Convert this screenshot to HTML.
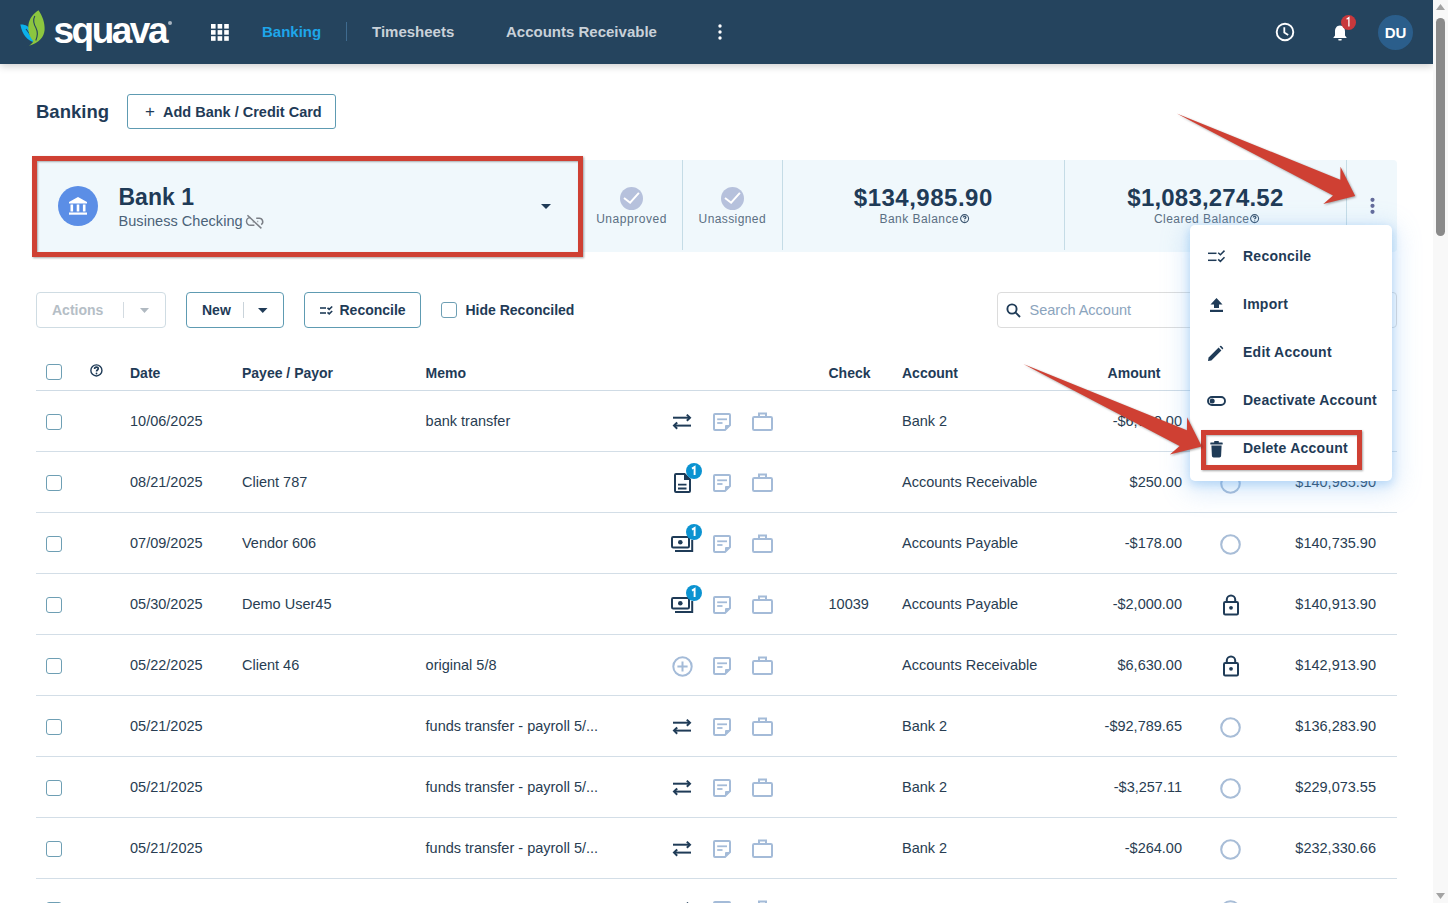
<!DOCTYPE html>
<html><head><meta charset="utf-8"><title>Banking</title>
<style>
*{box-sizing:border-box;margin:0;padding:0}
html,body{width:1448px;height:903px;overflow:hidden;background:#fff;font-family:"Liberation Sans",sans-serif;color:#1f3b57}
.abs{position:absolute}
.t{position:absolute;white-space:nowrap}
svg{position:absolute;overflow:visible}
</style></head><body>
<div class="abs" style="left:0;top:0;width:1433px;height:64px;background:#25445e;box-shadow:0 2px 8px rgba(0,0,0,.2);z-index:5">
<svg style="left:15px;top:5px" width="45" height="50" viewBox="0 0 45 50">
<path d="M5.3 19.6 C10 19.2 14 21.5 15.5 25 L18.8 37.2 C12 35.5 7.5 30 5.3 19.6Z" fill="#0cb0ea"/>
<path d="M11 24 L18.5 34" stroke="#24435e" stroke-width="1.1" fill="none"/>
<path d="M23.5 5.3 C27.5 11 30 18 29.6 25 C29 32 24.5 37.5 14 40.8 C16.5 39 18 37.5 18.3 36 C14.5 32 12.8 26 13.4 20 C14.5 13 18.5 8.5 23.5 5.3Z" fill="#8cc63f"/>
<path d="M19.8 11 C17.5 15.5 19 19.5 21 23 C23 27 22.5 31.5 20.8 35.5" stroke="#24435e" stroke-width="1.1" fill="none"/>
</svg>
<div class="t" style="left:53.5px;top:11.5px;font-size:37px;line-height:37px;font-weight:bold;color:#fff;letter-spacing:-2.5px">squava</div>
<div class="abs" style="left:168.3px;top:21px;width:4.2px;height:4.2px;border-radius:50%;background:#a9b5c1"></div>
<svg style="left:211px;top:23.5px" width="18" height="17" viewBox="0 0 18 17" fill="#fff"><rect x="0.0" y="0.0" width="4.6" height="4.6"/><rect x="6.6" y="0.0" width="4.6" height="4.6"/><rect x="13.2" y="0.0" width="4.6" height="4.6"/><rect x="0.0" y="6.1" width="4.6" height="4.6"/><rect x="6.6" y="6.1" width="4.6" height="4.6"/><rect x="13.2" y="6.1" width="4.6" height="4.6"/><rect x="0.0" y="12.2" width="4.6" height="4.6"/><rect x="6.6" y="12.2" width="4.6" height="4.6"/><rect x="13.2" y="12.2" width="4.6" height="4.6"/></svg>
<div class="t" style="left:262.00px;top:24.30px;font-size:15px;line-height:15px;color:#1ea6ea;font-weight:bold;">Banking</div>
<div class="abs" style="left:346px;top:22px;width:1px;height:19px;background:#3f6b8f"></div>
<div class="t" style="left:372.00px;top:24.30px;font-size:15px;line-height:15px;color:#c9d1d9;font-weight:bold;">Timesheets</div>
<div class="t" style="left:506.00px;top:24.30px;font-size:15px;line-height:15px;color:#c9d1d9;font-weight:bold;">Accounts Receivable</div>
<svg style="left:716px;top:23px" width="8" height="18" viewBox="0 0 8 18" fill="#fff"><circle cx="4" cy="3" r="1.7"/><circle cx="4" cy="9" r="1.7"/><circle cx="4" cy="15" r="1.7"/></svg>
<svg style="left:1275px;top:22px" width="20" height="20" viewBox="0 0 20 20"><circle cx="10" cy="10" r="8.3" stroke="#fff" stroke-width="1.9" fill="none"/><path d="M9.3 5.3 V10.6 L13.2 13" stroke="#fff" stroke-width="1.8" fill="none"/></svg>
<svg style="left:1331px;top:22px" width="18" height="20" viewBox="0 0 18 20"><path d="M9 3.5 C5.5 3.5 4 6.5 4 9.5 V13.5 L2.2 16 H15.8 L14 13.5 V9.5 C14 6.5 12.5 3.5 9 3.5Z" fill="#fff"/><rect x="7.2" y="17" width="3.6" height="1.5" rx="0.7" fill="#fff"/></svg>
<svg style="left:1341px;top:15px" width="15" height="15" viewBox="0 0 15 15"><circle cx="7.5" cy="7.5" r="7.5" fill="#c8383c"/><path d="M5.6 4.3 L7.9 2.6 V11.6" stroke="#fff" stroke-width="1.3" fill="none"/></svg>
<div class="abs" style="left:1378px;top:15px;width:35px;height:35px;border-radius:50%;background:#2b5e8b;color:#fff;font-size:15px;font-weight:bold;text-align:center;line-height:35px">DU</div>
</div>
<div class="abs" style="left:1433px;top:0;width:15px;height:903px;background:#f8f8f8;z-index:20"><svg style="left:3px;top:4px" width="9" height="6" viewBox="0 0 9 6"><path d="M4.5 0 L9 6 H0Z" fill="#a3a3a3"/></svg><div class="abs" style="left:3px;top:18px;width:9px;height:218px;border-radius:5px;background:#8a8a8a"></div><svg style="left:3px;top:893px" width="9" height="6" viewBox="0 0 9 6"><path d="M0 0 H9 L4.5 6Z" fill="#a3a3a3"/></svg></div>
<div class="t" style="left:36.00px;top:102.94px;font-size:18.5px;line-height:18.5px;color:#1f3b57;font-weight:bold;">Banking</div>
<div class="abs" style="left:127px;top:94px;width:209px;height:35px;border:1px solid #5e9bb2;border-radius:3px"></div>
<div class="t" style="left:145.00px;top:104.73px;font-size:14.5px;line-height:14.5px;color:#1f3b57;font-size:17px">+</div>
<div class="t" style="left:163.00px;top:104.73px;font-size:14.5px;line-height:14.5px;color:#1f3b57;font-weight:bold;">Add Bank / Credit Card</div>
<div class="abs" style="left:36px;top:160px;width:1361px;height:92px;background:#f0f8fc;border-radius:4px"></div>
<div class="abs" style="left:682px;top:160px;width:1px;height:90px;background:#c5dce6"></div>
<div class="abs" style="left:782px;top:160px;width:1px;height:90px;background:#c5dce6"></div>
<div class="abs" style="left:1064px;top:160px;width:1px;height:90px;background:#c5dce6"></div>
<div class="abs" style="left:1346px;top:160px;width:1px;height:90px;background:#c5dce6"></div>
<div class="abs" style="left:31.5px;top:156.2px;width:551px;height:100.7px;border:5px solid #cf4033;box-shadow:1px 1px 2px rgba(0,0,0,.35), inset 1px 1px 2px rgba(0,0,0,.3)"></div>
<div class="abs" style="left:58px;top:186px;width:40px;height:40px;border-radius:50%;background:#5b8ee6"></div>
<svg style="left:67px;top:195px" width="22" height="22" viewBox="0 0 22 22" fill="#fff">
<path d="M11 2 L20 7 V8.5 H2 V7Z"/><rect x="3.5" y="9.5" width="2.6" height="7"/><rect x="9.7" y="9.5" width="2.6" height="7"/><rect x="15.9" y="9.5" width="2.6" height="7"/><rect x="2" y="17.5" width="18" height="2.2"/>
</svg>
<div class="t" style="left:118.50px;top:185.53px;font-size:23px;line-height:23px;color:#1f3b57;font-weight:bold;">Bank 1</div>
<div class="t" style="left:118.50px;top:214.33px;font-size:14.5px;line-height:14.5px;color:#4b6278;letter-spacing:0.05px">Business Checking</div>
<svg style="left:240px;top:208px" width="30" height="26" viewBox="0 0 30 26" fill="none" stroke="#7b7f86" stroke-width="1.5">
<path d="M10.3 9.5 A3.9 3.9 0 0 0 10.5 17.3 H14.4"/><path d="M12.8 13.9 H13.6"/><path d="M16.2 10.2 H19.3 A3.5 3.5 0 0 1 21.2 16.6"/><path d="M17.4 13.4 H18.2"/><path d="M7.4 7.2 L21.4 20.4"/>
</svg>
<svg style="left:541px;top:204px" width="10" height="5" viewBox="0 0 10 5"><path d="M0 0 H10 L5 5Z" fill="#1f3b57"/></svg>
<svg style="left:620.1px;top:186.5px" width="23" height="23" viewBox="0 0 23 23"><circle cx="11.5" cy="11.5" r="11.5" fill="#b6c1dc"/><path d="M4 11 L10.1 15.7 L18.9 5.9" stroke="#fff" stroke-width="2" fill="none"/></svg>
<svg style="left:720.8px;top:186.5px" width="23" height="23" viewBox="0 0 23 23"><circle cx="11.5" cy="11.5" r="11.5" fill="#b6c1dc"/><path d="M4 11 L10.1 15.7 L18.9 5.9" stroke="#fff" stroke-width="2" fill="none"/></svg>
<div class="t" style="left:331.60px;width:600px;text-align:center;top:212.84px;font-size:12px;line-height:12px;color:#5b6f83;letter-spacing:0.55px">Unapproved</div>
<div class="t" style="left:432.30px;width:600px;text-align:center;top:212.84px;font-size:12px;line-height:12px;color:#5b6f83;letter-spacing:0.4px">Unassigned</div>
<div class="t" style="left:623.30px;width:600px;text-align:center;top:185.78px;font-size:24px;line-height:24px;color:#1f3b57;font-weight:bold;letter-spacing:0.5px">$134,985.90</div>
<div class="t" style="left:905.40px;width:600px;text-align:center;top:185.78px;font-size:24px;line-height:24px;color:#1f3b57;font-weight:bold;letter-spacing:0.2px">$1,083,274.52</div>
<div class="t" style="left:879.50px;top:212.84px;font-size:12px;line-height:12px;color:#5b6f83;letter-spacing:0.45px">Bank Balance</div>
<svg style="left:959.9px;top:214.4px" width="9.2" height="9.2" viewBox="0 0 12 12"><circle cx="6" cy="6" r="5.2" stroke="#3c5670" stroke-width="1.45" fill="none"/><path d="M4.3 4.7 C4.3 3.6 5.1 3 6 3 C7 3 7.7 3.6 7.7 4.5 C7.7 5.6 6.1 5.7 6.1 7" stroke="#3c5670" stroke-width="1.74" fill="none"/><circle cx="6.1" cy="8.9" r="0.85" fill="#3c5670"/></svg>
<div class="t" style="left:1154.00px;top:212.84px;font-size:12px;line-height:12px;color:#5b6f83;letter-spacing:0.45px">Cleared Balance</div>
<svg style="left:1249.9px;top:214.4px" width="9.2" height="9.2" viewBox="0 0 12 12"><circle cx="6" cy="6" r="5.2" stroke="#3c5670" stroke-width="1.45" fill="none"/><path d="M4.3 4.7 C4.3 3.6 5.1 3 6 3 C7 3 7.7 3.6 7.7 4.5 C7.7 5.6 6.1 5.7 6.1 7" stroke="#3c5670" stroke-width="1.74" fill="none"/><circle cx="6.1" cy="8.9" r="0.85" fill="#3c5670"/></svg>
<svg style="left:1368px;top:197px" width="9" height="18" viewBox="0 0 9 18" fill="#646b9a"><circle cx="4.5" cy="2.8" r="2.1"/><circle cx="4.5" cy="8.8" r="2.1"/><circle cx="4.5" cy="14.8" r="2.1"/></svg>
<div class="abs" style="left:36px;top:292px;width:130px;height:35.5px;border:1px solid #cfdce3;border-radius:4px"></div>
<div class="t" style="left:52.00px;top:303.15px;font-size:14px;line-height:14px;color:#b5bec6;font-weight:bold;">Actions</div>
<div class="abs" style="left:123px;top:302px;width:1px;height:16px;background:#d3dbe1"></div>
<svg style="left:140px;top:308px" width="9" height="5" viewBox="0 0 9 5"><path d="M0 0 H9 L4.5 5Z" fill="#b0b9c1"/></svg>
<div class="abs" style="left:186px;top:292px;width:98px;height:35.5px;border:1px solid #5e9bb2;border-radius:4px"></div>
<div class="t" style="left:202.00px;top:303.15px;font-size:14px;line-height:14px;color:#1f3b57;font-weight:bold;">New</div>
<div class="abs" style="left:242.5px;top:302px;width:1px;height:16px;background:#c9d3da"></div>
<svg style="left:258px;top:308px" width="9.5" height="5" viewBox="0 0 9.5 5"><path d="M0 0 H9.5 L4.75 5Z" fill="#1f3b57"/></svg>
<div class="abs" style="left:304px;top:292px;width:117px;height:35.5px;border:1px solid #5e9bb2;border-radius:4px"></div>
<svg style="left:320px;top:306px" width="13" height="9" viewBox="0 0 13 9" fill="none" stroke="#1f3b57" stroke-width="1.6"><path d="M0 2 H6"/><path d="M0 7 H6"/><path d="M7.5 1.8 L9.2 3.4 L12.2 0.5"/><path d="M7.5 6.3 L9.2 7.9 L12.2 5"/></svg>
<div class="t" style="left:339.50px;top:303.15px;font-size:14px;line-height:14px;color:#1f3b57;font-weight:bold;">Reconcile</div>
<div class="abs" style="left:441px;top:302px;width:16px;height:16px;border:1.3px solid #6e9fb4;border-radius:3px;background:#fff"></div>
<div class="t" style="left:465.50px;top:303.15px;font-size:14px;line-height:14px;color:#1f3b57;font-weight:bold;">Hide Reconciled</div>
<div class="abs" style="left:997px;top:292px;width:400px;height:35.5px;border:1px solid #dcdcdc;border-radius:4px"></div>
<svg style="left:1006px;top:302.5px" width="16" height="15" viewBox="0 0 16 15" fill="none" stroke="#1f3b57" stroke-width="1.9"><circle cx="6" cy="6" r="4.6"/><path d="M9.4 9.4 L14 14"/></svg>
<div class="t" style="left:1029.50px;top:302.73px;font-size:14.5px;line-height:14.5px;color:#8ba4bd;">Search Account</div>
<div class="abs" style="left:46px;top:364px;width:16px;height:16px;border:1.3px solid #6e9fb4;border-radius:3px"></div>
<svg style="left:89.8px;top:364.0px" width="12.8" height="12.8" viewBox="0 0 12 12"><circle cx="6" cy="6" r="5.2" stroke="#1f3b57" stroke-width="1.3" fill="none"/><path d="M4.3 4.7 C4.3 3.6 5.1 3 6 3 C7 3 7.7 3.6 7.7 4.5 C7.7 5.6 6.1 5.7 6.1 7" stroke="#1f3b57" stroke-width="1.56" fill="none"/><circle cx="6.1" cy="8.9" r="0.85" fill="#1f3b57"/></svg>
<div class="t" style="left:130.00px;top:366.15px;font-size:14px;line-height:14px;color:#1f3b57;font-weight:bold;">Date</div>
<div class="t" style="left:242.00px;top:366.15px;font-size:14px;line-height:14px;color:#1f3b57;font-weight:bold;">Payee / Payor</div>
<div class="t" style="left:425.60px;top:366.15px;font-size:14px;line-height:14px;color:#1f3b57;font-weight:bold;">Memo</div>
<div class="t" style="left:828.50px;top:366.15px;font-size:14px;line-height:14px;color:#1f3b57;font-weight:bold;">Check</div>
<div class="t" style="left:902.00px;top:366.15px;font-size:14px;line-height:14px;color:#1f3b57;font-weight:bold;">Account</div>
<div class="t" style="right:287.50px;top:366.15px;font-size:14px;line-height:14px;color:#1f3b57;font-weight:bold;">Amount</div>
<div class="abs" style="left:36px;top:389.5px;width:1361px;height:1.5px;background:#cfdbe5"></div>
<div class="abs" style="left:46px;top:413.5px;width:16px;height:16px;border:1.3px solid #6e9fb4;border-radius:3px"></div>
<div class="t" style="left:130.00px;top:414.43px;font-size:14.5px;line-height:14.5px;color:#283d52;">10/06/2025</div>
<div class="t" style="left:425.60px;top:414.43px;font-size:14.5px;line-height:14.5px;color:#283d52;">bank transfer</div>
<svg style="left:672px;top:413px" width="20" height="16" viewBox="0 0 20 16" fill="none" stroke="#1f3b57" stroke-width="2"><path d="M1 4.7 H18"/><path d="M14.8 1.6 L18 4.7 L14.8 7.8"/><path d="M19 12.6 H2"/><path d="M5.2 9.5 L2 12.6 L5.2 15.7"/></svg>
<svg style="left:713px;top:413px" width="18" height="18" viewBox="0 0 18 18"><path d="M2 1 H16 A1 1 0 0 1 17 2 V12 L12 17 H2 A1 1 0 0 1 1 16 V2 A1 1 0 0 1 2 1Z" fill="none" stroke="#a4bbd8" stroke-width="2"/><path d="M17 12 L12 17 V13 A1 1 0 0 1 13 12Z" fill="#a4bbd8"/><path d="M4.2 6.3 H14" stroke="#a4bbd8" stroke-width="1.8"/><path d="M4.2 10 H9.5" stroke="#a4bbd8" stroke-width="1.8"/></svg>
<svg style="left:751.9px;top:412.0px" width="21" height="19" viewBox="0 0 21 19" fill="none" stroke="#a4bbd8" stroke-width="2"><rect x="1" y="5" width="19" height="13" rx="1.2"/><path d="M7 5 V1.5 H14 V5"/></svg>
<div class="t" style="left:902.00px;top:414.43px;font-size:14.5px;line-height:14.5px;color:#283d52;">Bank 2</div>
<div class="t" style="right:266.00px;top:414.43px;font-size:14.5px;line-height:14.5px;color:#283d52;">-$6,000.00</div>
<svg style="left:1220.1px;top:411.5px" width="21" height="21" viewBox="0 0 21 21"><circle cx="10.5" cy="10.5" r="9.3" stroke="#a8bdd7" stroke-width="2.1" fill="none"/></svg>
<div class="t" style="right:72.00px;top:414.43px;font-size:14.5px;line-height:14.5px;color:#283d52;">$134,985.90</div>
<div class="abs" style="left:36px;top:450.5px;width:1361px;height:1.5px;background:#d3dee7"></div>
<div class="abs" style="left:46px;top:474.5px;width:16px;height:16px;border:1.3px solid #6e9fb4;border-radius:3px"></div>
<div class="t" style="left:130.00px;top:475.43px;font-size:14.5px;line-height:14.5px;color:#283d52;">08/21/2025</div>
<div class="t" style="left:242.00px;top:475.43px;font-size:14.5px;line-height:14.5px;color:#283d52;">Client 787</div>
<svg style="left:673.5px;top:473.2px" width="17" height="20" viewBox="0 0 17 20"><path d="M2 1 H10.5 L16 6.5 V18 A1 1 0 0 1 15 19 H2 A1 1 0 0 1 1 18 V2 A1 1 0 0 1 2 1Z" fill="none" stroke="#1f3b57" stroke-width="2"/><path d="M10 1 L16 7 H10Z" fill="#1f3b57"/><path d="M4 11.6 H12.5 M4 15.5 H12.5" stroke="#1f3b57" stroke-width="1.9"/></svg>
<svg style="left:686px;top:463px" width="16" height="16" viewBox="0 0 16 16"><circle cx="8" cy="8" r="8" fill="#0b93d1"/><path d="M6 5.6 L8.6 4 V12" stroke="#fff" stroke-width="1.9" fill="none"/></svg>
<svg style="left:713px;top:474px" width="18" height="18" viewBox="0 0 18 18"><path d="M2 1 H16 A1 1 0 0 1 17 2 V12 L12 17 H2 A1 1 0 0 1 1 16 V2 A1 1 0 0 1 2 1Z" fill="none" stroke="#a4bbd8" stroke-width="2"/><path d="M17 12 L12 17 V13 A1 1 0 0 1 13 12Z" fill="#a4bbd8"/><path d="M4.2 6.3 H14" stroke="#a4bbd8" stroke-width="1.8"/><path d="M4.2 10 H9.5" stroke="#a4bbd8" stroke-width="1.8"/></svg>
<svg style="left:751.9px;top:473.0px" width="21" height="19" viewBox="0 0 21 19" fill="none" stroke="#a4bbd8" stroke-width="2"><rect x="1" y="5" width="19" height="13" rx="1.2"/><path d="M7 5 V1.5 H14 V5"/></svg>
<div class="t" style="left:902.00px;top:475.43px;font-size:14.5px;line-height:14.5px;color:#283d52;">Accounts Receivable</div>
<div class="t" style="right:266.00px;top:475.43px;font-size:14.5px;line-height:14.5px;color:#283d52;">$250.00</div>
<svg style="left:1220.1px;top:472.5px" width="21" height="21" viewBox="0 0 21 21"><circle cx="10.5" cy="10.5" r="9.3" stroke="#a8bdd7" stroke-width="2.1" fill="none"/></svg>
<div class="t" style="right:72.00px;top:475.43px;font-size:14.5px;line-height:14.5px;color:#283d52;">$140,985.90</div>
<div class="abs" style="left:36px;top:511.5px;width:1361px;height:1.5px;background:#d3dee7"></div>
<div class="abs" style="left:46px;top:535.5px;width:16px;height:16px;border:1.3px solid #6e9fb4;border-radius:3px"></div>
<div class="t" style="left:130.00px;top:536.43px;font-size:14.5px;line-height:14.5px;color:#283d52;">07/09/2025</div>
<div class="t" style="left:242.00px;top:536.43px;font-size:14.5px;line-height:14.5px;color:#283d52;">Vendor 606</div>
<svg style="left:671px;top:536px" width="23" height="16" viewBox="0 0 23 16" fill="none" stroke="#1f3b57" stroke-width="2"><rect x="1" y="1" width="17" height="10.5" rx="1.2"/><circle cx="9.3" cy="6.2" r="2.3" fill="#1f3b57" stroke="none"/><path d="M4 15 H21.2 V4"/></svg>
<svg style="left:686px;top:524px" width="16" height="16" viewBox="0 0 16 16"><circle cx="8" cy="8" r="8" fill="#0b93d1"/><path d="M6 5.6 L8.6 4 V12" stroke="#fff" stroke-width="1.9" fill="none"/></svg>
<svg style="left:713px;top:535px" width="18" height="18" viewBox="0 0 18 18"><path d="M2 1 H16 A1 1 0 0 1 17 2 V12 L12 17 H2 A1 1 0 0 1 1 16 V2 A1 1 0 0 1 2 1Z" fill="none" stroke="#a4bbd8" stroke-width="2"/><path d="M17 12 L12 17 V13 A1 1 0 0 1 13 12Z" fill="#a4bbd8"/><path d="M4.2 6.3 H14" stroke="#a4bbd8" stroke-width="1.8"/><path d="M4.2 10 H9.5" stroke="#a4bbd8" stroke-width="1.8"/></svg>
<svg style="left:751.9px;top:534.0px" width="21" height="19" viewBox="0 0 21 19" fill="none" stroke="#a4bbd8" stroke-width="2"><rect x="1" y="5" width="19" height="13" rx="1.2"/><path d="M7 5 V1.5 H14 V5"/></svg>
<div class="t" style="left:902.00px;top:536.43px;font-size:14.5px;line-height:14.5px;color:#283d52;">Accounts Payable</div>
<div class="t" style="right:266.00px;top:536.43px;font-size:14.5px;line-height:14.5px;color:#283d52;">-$178.00</div>
<svg style="left:1220.1px;top:533.5px" width="21" height="21" viewBox="0 0 21 21"><circle cx="10.5" cy="10.5" r="9.3" stroke="#a8bdd7" stroke-width="2.1" fill="none"/></svg>
<div class="t" style="right:72.00px;top:536.43px;font-size:14.5px;line-height:14.5px;color:#283d52;">$140,735.90</div>
<div class="abs" style="left:36px;top:572.5px;width:1361px;height:1.5px;background:#d3dee7"></div>
<div class="abs" style="left:46px;top:596.5px;width:16px;height:16px;border:1.3px solid #6e9fb4;border-radius:3px"></div>
<div class="t" style="left:130.00px;top:597.43px;font-size:14.5px;line-height:14.5px;color:#283d52;">05/30/2025</div>
<div class="t" style="left:242.00px;top:597.43px;font-size:14.5px;line-height:14.5px;color:#283d52;">Demo User45</div>
<svg style="left:671px;top:597px" width="23" height="16" viewBox="0 0 23 16" fill="none" stroke="#1f3b57" stroke-width="2"><rect x="1" y="1" width="17" height="10.5" rx="1.2"/><circle cx="9.3" cy="6.2" r="2.3" fill="#1f3b57" stroke="none"/><path d="M4 15 H21.2 V4"/></svg>
<svg style="left:686px;top:585px" width="16" height="16" viewBox="0 0 16 16"><circle cx="8" cy="8" r="8" fill="#0b93d1"/><path d="M6 5.6 L8.6 4 V12" stroke="#fff" stroke-width="1.9" fill="none"/></svg>
<svg style="left:713px;top:596px" width="18" height="18" viewBox="0 0 18 18"><path d="M2 1 H16 A1 1 0 0 1 17 2 V12 L12 17 H2 A1 1 0 0 1 1 16 V2 A1 1 0 0 1 2 1Z" fill="none" stroke="#a4bbd8" stroke-width="2"/><path d="M17 12 L12 17 V13 A1 1 0 0 1 13 12Z" fill="#a4bbd8"/><path d="M4.2 6.3 H14" stroke="#a4bbd8" stroke-width="1.8"/><path d="M4.2 10 H9.5" stroke="#a4bbd8" stroke-width="1.8"/></svg>
<svg style="left:751.9px;top:595.0px" width="21" height="19" viewBox="0 0 21 19" fill="none" stroke="#a4bbd8" stroke-width="2"><rect x="1" y="5" width="19" height="13" rx="1.2"/><path d="M7 5 V1.5 H14 V5"/></svg>
<div class="t" style="left:828.50px;top:597.43px;font-size:14.5px;line-height:14.5px;color:#283d52;">10039</div>
<div class="t" style="left:902.00px;top:597.43px;font-size:14.5px;line-height:14.5px;color:#283d52;">Accounts Payable</div>
<div class="t" style="right:266.00px;top:597.43px;font-size:14.5px;line-height:14.5px;color:#283d52;">-$2,000.00</div>
<svg style="left:1222px;top:594px" width="18" height="22" viewBox="0 0 18 22" fill="none" stroke="#1f3b57" stroke-width="2"><rect x="2" y="8" width="14" height="12.5" rx="1.2"/><path d="M4.8 8 V5.6 A4.2 4.2 0 0 1 13.2 5.6 V8"/><circle cx="9" cy="13.8" r="1.9" fill="#1f3b57" stroke="none"/></svg>
<div class="t" style="right:72.00px;top:597.43px;font-size:14.5px;line-height:14.5px;color:#283d52;">$140,913.90</div>
<div class="abs" style="left:36px;top:633.5px;width:1361px;height:1.5px;background:#d3dee7"></div>
<div class="abs" style="left:46px;top:657.5px;width:16px;height:16px;border:1.3px solid #6e9fb4;border-radius:3px"></div>
<div class="t" style="left:130.00px;top:658.43px;font-size:14.5px;line-height:14.5px;color:#283d52;">05/22/2025</div>
<div class="t" style="left:242.00px;top:658.43px;font-size:14.5px;line-height:14.5px;color:#283d52;">Client 46</div>
<div class="t" style="left:425.60px;top:658.43px;font-size:14.5px;line-height:14.5px;color:#283d52;">original 5/8</div>
<svg style="left:671.9px;top:655.5px" width="21" height="21" viewBox="0 0 21 21" fill="none" stroke="#a4bbd8" stroke-width="2"><circle cx="10.5" cy="10.5" r="9.2"/><path d="M5.4 10.5 H15.6 M10.5 5.4 V15.6"/></svg>
<svg style="left:713px;top:657px" width="18" height="18" viewBox="0 0 18 18"><path d="M2 1 H16 A1 1 0 0 1 17 2 V12 L12 17 H2 A1 1 0 0 1 1 16 V2 A1 1 0 0 1 2 1Z" fill="none" stroke="#a4bbd8" stroke-width="2"/><path d="M17 12 L12 17 V13 A1 1 0 0 1 13 12Z" fill="#a4bbd8"/><path d="M4.2 6.3 H14" stroke="#a4bbd8" stroke-width="1.8"/><path d="M4.2 10 H9.5" stroke="#a4bbd8" stroke-width="1.8"/></svg>
<svg style="left:751.9px;top:656.0px" width="21" height="19" viewBox="0 0 21 19" fill="none" stroke="#a4bbd8" stroke-width="2"><rect x="1" y="5" width="19" height="13" rx="1.2"/><path d="M7 5 V1.5 H14 V5"/></svg>
<div class="t" style="left:902.00px;top:658.43px;font-size:14.5px;line-height:14.5px;color:#283d52;">Accounts Receivable</div>
<div class="t" style="right:266.00px;top:658.43px;font-size:14.5px;line-height:14.5px;color:#283d52;">$6,630.00</div>
<svg style="left:1222px;top:655px" width="18" height="22" viewBox="0 0 18 22" fill="none" stroke="#1f3b57" stroke-width="2"><rect x="2" y="8" width="14" height="12.5" rx="1.2"/><path d="M4.8 8 V5.6 A4.2 4.2 0 0 1 13.2 5.6 V8"/><circle cx="9" cy="13.8" r="1.9" fill="#1f3b57" stroke="none"/></svg>
<div class="t" style="right:72.00px;top:658.43px;font-size:14.5px;line-height:14.5px;color:#283d52;">$142,913.90</div>
<div class="abs" style="left:36px;top:694.5px;width:1361px;height:1.5px;background:#d3dee7"></div>
<div class="abs" style="left:46px;top:718.5px;width:16px;height:16px;border:1.3px solid #6e9fb4;border-radius:3px"></div>
<div class="t" style="left:130.00px;top:719.43px;font-size:14.5px;line-height:14.5px;color:#283d52;">05/21/2025</div>
<div class="t" style="left:425.60px;top:719.43px;font-size:14.5px;line-height:14.5px;color:#283d52;">funds transfer - payroll 5/...</div>
<svg style="left:672px;top:718px" width="20" height="16" viewBox="0 0 20 16" fill="none" stroke="#1f3b57" stroke-width="2"><path d="M1 4.7 H18"/><path d="M14.8 1.6 L18 4.7 L14.8 7.8"/><path d="M19 12.6 H2"/><path d="M5.2 9.5 L2 12.6 L5.2 15.7"/></svg>
<svg style="left:713px;top:718px" width="18" height="18" viewBox="0 0 18 18"><path d="M2 1 H16 A1 1 0 0 1 17 2 V12 L12 17 H2 A1 1 0 0 1 1 16 V2 A1 1 0 0 1 2 1Z" fill="none" stroke="#a4bbd8" stroke-width="2"/><path d="M17 12 L12 17 V13 A1 1 0 0 1 13 12Z" fill="#a4bbd8"/><path d="M4.2 6.3 H14" stroke="#a4bbd8" stroke-width="1.8"/><path d="M4.2 10 H9.5" stroke="#a4bbd8" stroke-width="1.8"/></svg>
<svg style="left:751.9px;top:717.0px" width="21" height="19" viewBox="0 0 21 19" fill="none" stroke="#a4bbd8" stroke-width="2"><rect x="1" y="5" width="19" height="13" rx="1.2"/><path d="M7 5 V1.5 H14 V5"/></svg>
<div class="t" style="left:902.00px;top:719.43px;font-size:14.5px;line-height:14.5px;color:#283d52;">Bank 2</div>
<div class="t" style="right:266.00px;top:719.43px;font-size:14.5px;line-height:14.5px;color:#283d52;">-$92,789.65</div>
<svg style="left:1220.1px;top:716.5px" width="21" height="21" viewBox="0 0 21 21"><circle cx="10.5" cy="10.5" r="9.3" stroke="#a8bdd7" stroke-width="2.1" fill="none"/></svg>
<div class="t" style="right:72.00px;top:719.43px;font-size:14.5px;line-height:14.5px;color:#283d52;">$136,283.90</div>
<div class="abs" style="left:36px;top:755.5px;width:1361px;height:1.5px;background:#d3dee7"></div>
<div class="abs" style="left:46px;top:779.5px;width:16px;height:16px;border:1.3px solid #6e9fb4;border-radius:3px"></div>
<div class="t" style="left:130.00px;top:780.43px;font-size:14.5px;line-height:14.5px;color:#283d52;">05/21/2025</div>
<div class="t" style="left:425.60px;top:780.43px;font-size:14.5px;line-height:14.5px;color:#283d52;">funds transfer - payroll 5/...</div>
<svg style="left:672px;top:779px" width="20" height="16" viewBox="0 0 20 16" fill="none" stroke="#1f3b57" stroke-width="2"><path d="M1 4.7 H18"/><path d="M14.8 1.6 L18 4.7 L14.8 7.8"/><path d="M19 12.6 H2"/><path d="M5.2 9.5 L2 12.6 L5.2 15.7"/></svg>
<svg style="left:713px;top:779px" width="18" height="18" viewBox="0 0 18 18"><path d="M2 1 H16 A1 1 0 0 1 17 2 V12 L12 17 H2 A1 1 0 0 1 1 16 V2 A1 1 0 0 1 2 1Z" fill="none" stroke="#a4bbd8" stroke-width="2"/><path d="M17 12 L12 17 V13 A1 1 0 0 1 13 12Z" fill="#a4bbd8"/><path d="M4.2 6.3 H14" stroke="#a4bbd8" stroke-width="1.8"/><path d="M4.2 10 H9.5" stroke="#a4bbd8" stroke-width="1.8"/></svg>
<svg style="left:751.9px;top:778.0px" width="21" height="19" viewBox="0 0 21 19" fill="none" stroke="#a4bbd8" stroke-width="2"><rect x="1" y="5" width="19" height="13" rx="1.2"/><path d="M7 5 V1.5 H14 V5"/></svg>
<div class="t" style="left:902.00px;top:780.43px;font-size:14.5px;line-height:14.5px;color:#283d52;">Bank 2</div>
<div class="t" style="right:266.00px;top:780.43px;font-size:14.5px;line-height:14.5px;color:#283d52;">-$3,257.11</div>
<svg style="left:1220.1px;top:777.5px" width="21" height="21" viewBox="0 0 21 21"><circle cx="10.5" cy="10.5" r="9.3" stroke="#a8bdd7" stroke-width="2.1" fill="none"/></svg>
<div class="t" style="right:72.00px;top:780.43px;font-size:14.5px;line-height:14.5px;color:#283d52;">$229,073.55</div>
<div class="abs" style="left:36px;top:816.5px;width:1361px;height:1.5px;background:#d3dee7"></div>
<div class="abs" style="left:46px;top:840.5px;width:16px;height:16px;border:1.3px solid #6e9fb4;border-radius:3px"></div>
<div class="t" style="left:130.00px;top:841.43px;font-size:14.5px;line-height:14.5px;color:#283d52;">05/21/2025</div>
<div class="t" style="left:425.60px;top:841.43px;font-size:14.5px;line-height:14.5px;color:#283d52;">funds transfer - payroll 5/...</div>
<svg style="left:672px;top:840px" width="20" height="16" viewBox="0 0 20 16" fill="none" stroke="#1f3b57" stroke-width="2"><path d="M1 4.7 H18"/><path d="M14.8 1.6 L18 4.7 L14.8 7.8"/><path d="M19 12.6 H2"/><path d="M5.2 9.5 L2 12.6 L5.2 15.7"/></svg>
<svg style="left:713px;top:840px" width="18" height="18" viewBox="0 0 18 18"><path d="M2 1 H16 A1 1 0 0 1 17 2 V12 L12 17 H2 A1 1 0 0 1 1 16 V2 A1 1 0 0 1 2 1Z" fill="none" stroke="#a4bbd8" stroke-width="2"/><path d="M17 12 L12 17 V13 A1 1 0 0 1 13 12Z" fill="#a4bbd8"/><path d="M4.2 6.3 H14" stroke="#a4bbd8" stroke-width="1.8"/><path d="M4.2 10 H9.5" stroke="#a4bbd8" stroke-width="1.8"/></svg>
<svg style="left:751.9px;top:839.0px" width="21" height="19" viewBox="0 0 21 19" fill="none" stroke="#a4bbd8" stroke-width="2"><rect x="1" y="5" width="19" height="13" rx="1.2"/><path d="M7 5 V1.5 H14 V5"/></svg>
<div class="t" style="left:902.00px;top:841.43px;font-size:14.5px;line-height:14.5px;color:#283d52;">Bank 2</div>
<div class="t" style="right:266.00px;top:841.43px;font-size:14.5px;line-height:14.5px;color:#283d52;">-$264.00</div>
<svg style="left:1220.1px;top:838.5px" width="21" height="21" viewBox="0 0 21 21"><circle cx="10.5" cy="10.5" r="9.3" stroke="#a8bdd7" stroke-width="2.1" fill="none"/></svg>
<div class="t" style="right:72.00px;top:841.43px;font-size:14.5px;line-height:14.5px;color:#283d52;">$232,330.66</div>
<div class="abs" style="left:36px;top:877.5px;width:1361px;height:1.5px;background:#d3dee7"></div>
<div class="abs" style="left:46px;top:901.5px;width:16px;height:16px;border:1.3px solid #6e9fb4;border-radius:3px"></div>
<div class="t" style="left:130.00px;top:902.43px;font-size:14.5px;line-height:14.5px;color:#283d52;">05/21/2025</div>
<div class="t" style="left:425.60px;top:902.43px;font-size:14.5px;line-height:14.5px;color:#283d52;">funds transfer - payroll 5/...</div>
<svg style="left:672px;top:901px" width="20" height="16" viewBox="0 0 20 16" fill="none" stroke="#1f3b57" stroke-width="2"><path d="M1 4.7 H18"/><path d="M14.8 1.6 L18 4.7 L14.8 7.8"/><path d="M19 12.6 H2"/><path d="M5.2 9.5 L2 12.6 L5.2 15.7"/></svg>
<svg style="left:713px;top:901px" width="18" height="18" viewBox="0 0 18 18"><path d="M2 1 H16 A1 1 0 0 1 17 2 V12 L12 17 H2 A1 1 0 0 1 1 16 V2 A1 1 0 0 1 2 1Z" fill="none" stroke="#a4bbd8" stroke-width="2"/><path d="M17 12 L12 17 V13 A1 1 0 0 1 13 12Z" fill="#a4bbd8"/><path d="M4.2 6.3 H14" stroke="#a4bbd8" stroke-width="1.8"/><path d="M4.2 10 H9.5" stroke="#a4bbd8" stroke-width="1.8"/></svg>
<svg style="left:751.9px;top:900.0px" width="21" height="19" viewBox="0 0 21 19" fill="none" stroke="#a4bbd8" stroke-width="2"><rect x="1" y="5" width="19" height="13" rx="1.2"/><path d="M7 5 V1.5 H14 V5"/></svg>
<div class="t" style="left:902.00px;top:902.43px;font-size:14.5px;line-height:14.5px;color:#283d52;">Bank 2</div>
<div class="t" style="right:266.00px;top:902.43px;font-size:14.5px;line-height:14.5px;color:#283d52;">-$100.00</div>
<svg style="left:1220.1px;top:899.5px" width="21" height="21" viewBox="0 0 21 21"><circle cx="10.5" cy="10.5" r="9.3" stroke="#a8bdd7" stroke-width="2.1" fill="none"/></svg>
<div class="t" style="right:72.00px;top:902.43px;font-size:14.5px;line-height:14.5px;color:#283d52;">$232,594.66</div>
<div class="abs" style="left:36px;top:938.5px;width:1361px;height:1.5px;background:#d3dee7"></div>
<div class="abs" style="left:1190px;top:225px;width:202px;height:255.5px;background:#fff;border-radius:5px;box-shadow:0 3px 8px 1px rgba(90,165,240,.30), 0 6px 26px 4px rgba(110,175,240,.28);z-index:10"></div>
<div class="t" style="left:1243.00px;top:249.15px;font-size:14px;line-height:14px;color:#1f3b57;font-weight:bold;z-index:11;letter-spacing:0.25px;">Reconcile</div>
<div class="t" style="left:1243.00px;top:297.15px;font-size:14px;line-height:14px;color:#1f3b57;font-weight:bold;z-index:11;letter-spacing:0.25px;">Import</div>
<div class="t" style="left:1243.00px;top:345.15px;font-size:14px;line-height:14px;color:#1f3b57;font-weight:bold;z-index:11;letter-spacing:0.25px;">Edit Account</div>
<div class="t" style="left:1243.00px;top:393.15px;font-size:14px;line-height:14px;color:#1f3b57;font-weight:bold;z-index:11;letter-spacing:0.25px;">Deactivate Account</div>
<div class="t" style="left:1243.00px;top:441.15px;font-size:14px;line-height:14px;color:#1f3b57;font-weight:bold;z-index:11;letter-spacing:0.25px;">Delete Account</div>
<svg style="left:1208px;top:250px;z-index:11" width="18" height="13" viewBox="0 0 18 13" fill="none" stroke="#1f3b57" stroke-width="1.5"><path d="M0 3.3 H8.5"/><path d="M0 10.3 H8.5"/><path d="M10.2 2.7 L12.4 4.7 L16.5 0.6"/><path d="M10.2 9.4 L12.4 11.4 L16.5 7.3"/></svg>
<svg style="left:1210px;top:298px;z-index:11" width="13" height="14" viewBox="0 0 13 14" fill="#1f3b57"><path d="M6.5 0 L12.5 6.5 H9 V10 H4 V6.5 H0.5Z"/><rect x="0" y="11.8" width="13" height="2.2"/></svg>
<svg style="left:1208px;top:346px;z-index:11" width="16" height="15" viewBox="0 0 16 15" fill="#1f3b57"><path d="M0 15 L0.6 11.6 L10.6 1.6 L13.4 4.4 L3.4 14.4Z"/><path d="M11.6 0.6 L12.2 0 A0.8 0.8 0 0 1 13.3 0 L15.0 1.7 A0.8 0.8 0 0 1 15 2.8 L14.4 3.4Z"/></svg>
<svg style="left:1207px;top:396px;z-index:11" width="19" height="10" viewBox="0 0 19 10" fill="none" stroke="#1f3b57" stroke-width="1.9"><rect x="1" y="1" width="17" height="8" rx="4"/><circle cx="5.2" cy="5" r="2.5" fill="#1f3b57" stroke="none"/></svg>
<svg style="left:1210px;top:440.5px;z-index:11" width="13" height="16.5" viewBox="0 0 13 16.5" fill="#1f3b57"><rect x="0.3" y="1.6" width="12.4" height="1.9" rx="0.5"/><rect x="4.2" y="0" width="4.6" height="2.4" rx="0.5"/><path d="M1.4 4.5 H11.6 L11.1 14.8 A1.7 1.7 0 0 1 9.4 16.5 H3.6 A1.7 1.7 0 0 1 1.9 14.8Z"/></svg>
<div class="abs" style="left:1201px;top:430px;width:161px;height:40px;border:5px solid #cf4033;box-shadow:1px 1px 2px rgba(0,0,0,.35), inset 1px 1px 2px rgba(0,0,0,.3);z-index:12"></div>
<svg style="left:0;top:0;z-index:15;filter:drop-shadow(1px 1px 1.2px rgba(0,0,0,.35))" width="1448" height="903" viewBox="0 0 1448 903"><path d="M1176.7 113.4 L1340.3 179.8 L1340.5 166.8 L1355.2 196.0 L1323.3 204.0 L1333.0 195.5Z" fill="#cf4033"/></svg>
<svg style="left:0;top:0;z-index:15;filter:drop-shadow(1px 1px 1.2px rgba(0,0,0,.35))" width="1448" height="903" viewBox="0 0 1448 903"><path d="M1023.3 363.9 L1186.9 430.3 L1187.1 417.3 L1201.8 446.5 L1169.9 454.5 L1179.6 446.0Z" fill="#cf4033"/></svg>
</body></html>
